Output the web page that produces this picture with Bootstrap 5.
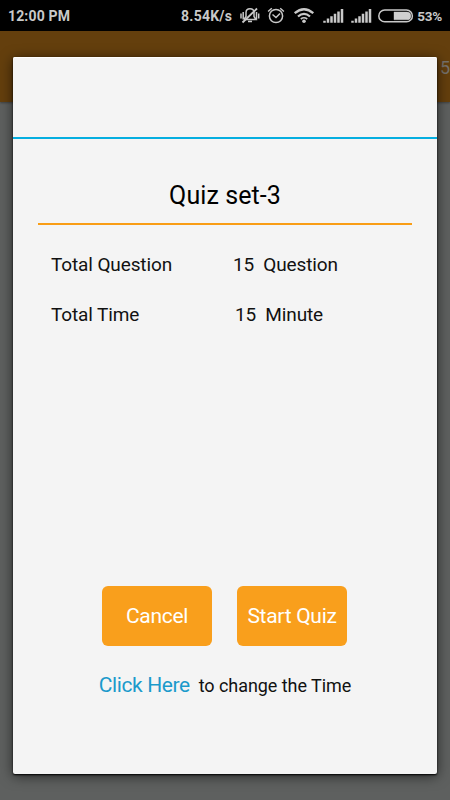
<!DOCTYPE html>
<html lang="en">
<head>
<meta charset="utf-8">
<meta name="viewport" content="width=device-width, initial-scale=1">
<title>Quiz set-3</title>
<link href="https://cdn.jsdelivr.net/npm/bootstrap@5.3.0/dist/css/bootstrap.min.css" rel="stylesheet">
<style>
body{font-family:Roboto,"Liberation Sans",sans-serif;background:#5e605f;width:450px;height:800px}
.status{height:31px;background:#000;color:#c9c9c9;font-weight:700;padding:2px 8px 0}
.status svg{display:block;flex:none;margin-top:-2px}
.clock{font-size:14px;letter-spacing:.15px}
.speed{font-size:14px;letter-spacing:.25px}
.pct{font-size:13.5px;letter-spacing:-.25px;font-weight:700}
.appbar{height:71px;background:#643f0d;color:#76716b;font-size:18px;padding-left:440px;line-height:73px;box-shadow:0 1px 2px #0005;white-space:nowrap}
.dialog{left:13px;top:57px;width:424px;height:717px;background:#f4f4f4;border-radius:2px;color:#111;box-shadow:0 1px 2px #000,0 2px 13px #0009,inset 0 1px #fff}
.dialog-head{height:82px;border-bottom:2px solid #05aee0;flex:none}
.dialog-body{padding:0 25px}
.quiz-title{height:84px;padding-top:37px;font-size:25px;line-height:40px;color:#000;font-weight:400;letter-spacing:.08px}
.rule{height:2px;background:#f99d15}
.facts{padding:14px 13px 0}
.fact{height:51px;line-height:51px;font-size:19px;letter-spacing:-.12px;white-space:pre}
.fact + .fact{line-height:50px}
.fact-label{width:182px}
.fact + .fact .fact-label{width:184px}
.btn-quiz{width:110px;height:60px;padding:2px 0 0;border:0;border-radius:6px;background:#f99f1c;color:#fff;font-size:21px;letter-spacing:-.28px;white-space:nowrap}
.btn-quiz:hover{background:#f99f1c;color:#fff}
.actions{gap:25px;margin-right:1px}
.footnote{height:80px;margin-bottom:48px;font-size:18px;letter-spacing:-.06px;white-space:nowrap}
.footnote a{font-size:21px;color:#1b9acb;letter-spacing:-.4px;margin-right:1px}
</style>
<script src="https://cdn.jsdelivr.net/npm/bootstrap@5.3.0/dist/js/bootstrap.bundle.min.js"></script>
</head>
<body class="overflow-hidden position-relative">
<header class="status d-flex align-items-center">
  <span class="clock">12:00 PM</span>
  <span class="speed ms-auto">8.54K/s</span>
  <svg width="185" height="31" viewBox="232 0 185 31" fill="none" stroke="#c9c9c9" stroke-width="1.5">
    <path d="M244 19.500h12l-2-3v-4c0-5-8-5-8 0v4l-2 3M248 21.500h4"/>
    <path d="M242.500 22.500 257 8.500" stroke-width="1.800"/>
    <path d="M241 13.500v5M243.200 12v7.500M256.500 12v7.500M258.700 13.500v5" stroke-width="1.500"/>
    <circle cx="276" cy="16" r="6.600"/>
    <path d="M272.500 14.500l3.500 3 4-4M268.100 11.500l3.700-3.200M283.900 11.500l-3.700-3.200"/>
    <path d="M294.700 13.200Q304 5.200 313.300 13.200M298 16.500Q304 11.300 310 16.500" stroke-width="2.300"/>
    <path d="M300.800 19Q304 16.500 307.200 19" stroke-width="1.700"/>
    <circle cx="304" cy="21.200" r="1.800" fill="#c9c9c9" stroke="none"/>
    <path id="signal" d="M324.500 22.800v-2M328 22.800v-4.300M331.500 22.800v-6.600M335 22.800v-9M338.500 22.800v-11.300M342 22.800v-13.800" stroke-width="2.500"/>
    <use href="#signal" x="28"/>
    <rect x="378.800" y="10" width="33.600" height="11.800" rx="5.900"/>
    <path d="M394 12h13a3.900 3.900 0 0 1 0 7.800H394z" fill="#d0d0d0" stroke="#d0d0d0" stroke-width=".4"/>
  </svg>
  <span class="pct">53%</span>
</header>
<div class="appbar overflow-hidden">5</div>
<main class="dialog position-absolute d-flex flex-column">
  <div class="dialog-head"></div>
  <div class="dialog-body d-flex flex-column flex-grow-1">
    <h1 class="quiz-title text-center mb-0">Quiz set-3</h1>
    <div class="rule"></div>
    <div class="facts">
      <div class="fact d-flex"><div class="fact-label">Total Question</div><div>15  Question</div></div>
      <div class="fact d-flex"><div class="fact-label">Total Time</div><div>15  Minute</div></div>
    </div>
    <div class="actions d-flex justify-content-center mt-auto">
      <button class="btn btn-quiz" type="button">Cancel</button>
      <button class="btn btn-quiz" type="button">Start Quiz</button>
    </div>
    <div class="footnote d-flex align-items-center justify-content-center">
      <div class="d-flex align-items-baseline gap-2"><a href="#" class="text-decoration-none">Click Here</a><span>to change the Time</span></div>
    </div>
  </div>
</main>
</body>
</html>
